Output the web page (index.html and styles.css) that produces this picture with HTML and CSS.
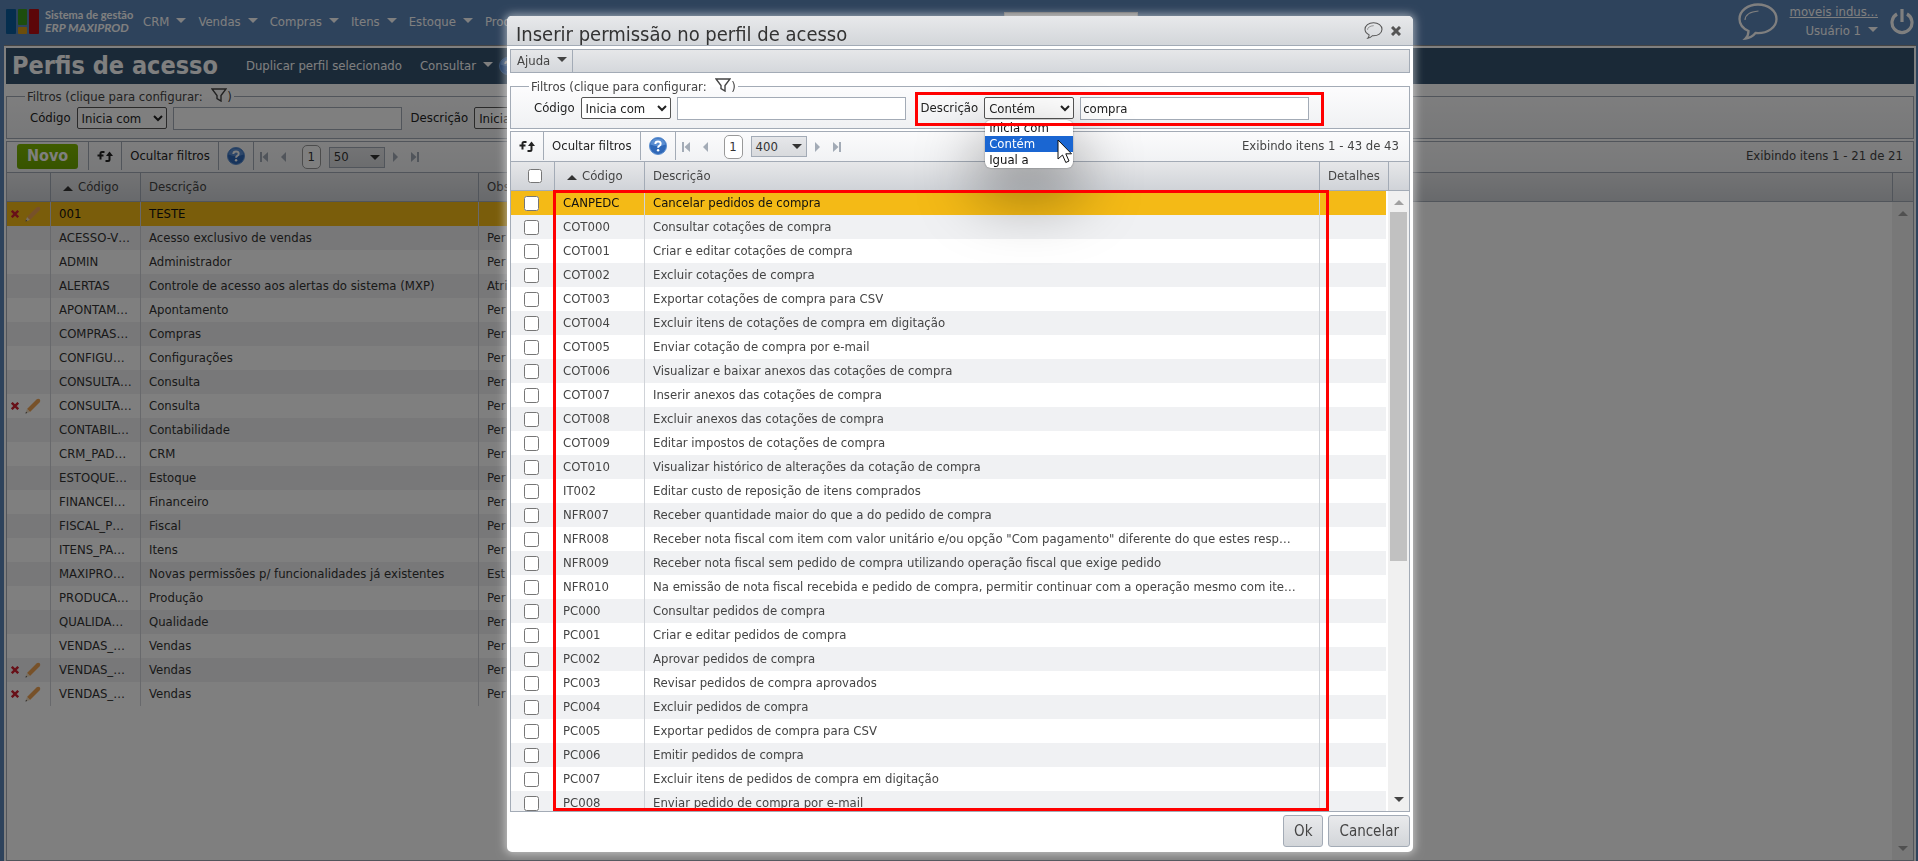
FILE: index.html
```html
<!DOCTYPE html>
<html lang="pt-BR">
<head>
<meta charset="utf-8">
<title>Perfis de acesso</title>
<link rel="stylesheet" href="styles.css">
</head>
<body>
<svg class="sprite" aria-hidden="true">
  <symbol id="i-refresh" viewBox="0 0 16 12"><path d="M3.500 9.500V3.500Q3.500 2 5 2H7.500M.5 5.500H6.500" fill="none" stroke="currentColor" stroke-width="2"/><path d="M12.500 4V9.500Q12.500 11 11 11H8.500" fill="none" stroke="currentColor" stroke-width="2"/><path d="M9 6 12.500 1.500 16 6Z" fill="currentColor"/></symbol>
  <symbol id="i-funnel" viewBox="0 0 16 14"><path d="M1 1H15L10 7.500V13L6 10.500V7.500Z" fill="#fff" fill-opacity=".3" stroke="currentColor" stroke-width="1.400"/></symbol>
  <symbol id="i-help" viewBox="0 0 18 18"><circle cx="9" cy="9" r="8.500" fill="#2f68b8" stroke="#5d8fd0"/><path d="M1.500 7.500A7.700 7.700 0 0 1 16.500 7.500Q9 11 1.500 7.500Z" fill="#6fa0dd" opacity=".7"/><path d="M6.300 7Q6.400 4.500 9 4.500T11.700 6.800Q11.700 8.200 10.300 8.900 9.100 9.500 9.100 10.800" fill="none" stroke="#fff" stroke-width="1.900"/><circle cx="9.100" cy="13.200" r="1.200" fill="#fff"/></symbol>
  <symbol id="i-first" viewBox="0 0 8 10"><path d="M0 0H2V10H0ZM8 0V10L2.500 5Z" fill="currentColor"/></symbol>
  <symbol id="i-prev" viewBox="0 0 8 10"><path d="M6 0V10L1 5Z" fill="currentColor"/></symbol>
  <symbol id="i-next" viewBox="0 0 8 10"><path d="M2 0V10L7 5Z" fill="currentColor"/></symbol>
  <symbol id="i-last" viewBox="0 0 8 10"><path d="M6 0H8V10H6ZM0 0V10L5.500 5Z" fill="currentColor"/></symbol>
  <symbol id="i-balloon" viewBox="0 0 40 37"><path d="M20 1.500C9.500 1.500 1.500 8 1.500 16 1.500 21 5 25.500 10.500 28 10.500 31 9.500 33.500 7.500 35.500 12 35 15.500 32.500 17.500 30 30 31 38.500 24 38.500 16 38.500 8 30.500 1.500 20 1.500Z" fill="none" stroke="currentColor" stroke-width="2.300"/><path d="M7 17Q7.500 9 20.500 8" fill="none" stroke="currentColor" stroke-width="1.200"/></symbol>
  <symbol id="i-power" viewBox="0 0 24 26"><path d="M7 5A10 10 0 1 0 17 5" fill="none" stroke="currentColor" stroke-width="3.200"/><path d="M12 0V13" stroke="currentColor" stroke-width="3.200"/></symbol>
  <symbol id="i-x" viewBox="0 0 10 10"><path d="M1 1 9 9M9 1 1 9" stroke="currentColor" stroke-width="3"/></symbol>
  <symbol id="i-pencil" viewBox="0 0 16 16"><path d="M2 11 11.500 1.500Q13 0 14.800 1.200 16 3 14.500 4.500L5 14Z" fill="#efa352"/><path d="M2 11 5 14 .5 15.500Z" fill="#f0dcc0"/><path d="M.5 15.500 1 13.800 2.200 15Z" fill="#444"/></symbol>
</svg>

<div class="app">
  <header class="top">
    <a class="logo" href="#" aria-label="ERP MAXIPROD">
      <svg width="34" height="26" viewBox="0 0 34 26" aria-hidden="true"><rect width="10" height="25" rx="1" fill="#0a5d9c"/><rect x="12" width="9" height="16" rx="1" fill="#3a9a1c"/><rect x="12" y="18" width="9" height="7" rx="1" fill="#d99b16"/><rect x="23" width="10" height="25" rx="1" fill="#b80d12"/></svg>
      <span class="logo-text"><small>Sistema de gestão</small><b>ERP MAXIPROD</b></span>
    </a>
    <nav class="menu">
      <a href="#">CRM</a><a href="#">Vendas</a><a href="#">Compras</a><a href="#">Itens</a><a href="#">Estoque</a><a href="#">Prod</a>
    </nav>
    <input class="search" type="text" aria-label="Pesquisar">
    <div class="account">
      <svg class="balloon" width="40" height="37"><use href="#i-balloon"/></svg>
      <div class="who"><a class="company" href="#">moveis indus...</a><a class="drop" href="#">Usuário 1</a></div>
      <svg width="24" height="26"><use href="#i-power"/></svg>
    </div>
  </header>

  <main class="page">
    <div class="titlebar">
      <h1>Perfis de acesso</h1>
      <a href="#">Duplicar perfil selecionado</a>
      <a class="drop" href="#">Consultar</a>
      <svg width="18" height="18"><use href="#i-help"/></svg>
    </div>
    <fieldset class="filters">
      <legend>Filtros (clique para configurar: <svg width="16" height="14"><use href="#i-funnel"/></svg>)</legend>
      <div class="fields">
        <div class="field"><label for="p-cod-op">Código</label><select id="p-cod-op"><option>Inicia com</option></select><input type="text" aria-label="Código"></div>
        <div class="field"><label for="p-desc-op">Descrição</label><select id="p-desc-op"><option>Inicia com</option></select><input type="text" aria-label="Descrição"></div>
      </div>
    </fieldset>
    <section class="grid">
      <div class="toolbar">
        <div class="tool"><button class="new">Novo</button></div>
        <button class="tool" aria-label="Atualizar"><svg width="16" height="12"><use href="#i-refresh"/></svg></button>
        <button class="tool">Ocultar filtros</button>
        <button class="tool" aria-label="Ajuda"><svg width="18" height="18"><use href="#i-help"/></svg></button>
        <div class="pager">
          <svg width="8" height="10"><use href="#i-first"/></svg><svg width="8" height="10"><use href="#i-prev"/></svg>
          <span class="current">1</span>
          <button class="size">50</button>
          <svg width="8" height="10"><use href="#i-next"/></svg><svg width="8" height="10"><use href="#i-last"/></svg>
        </div>
        <span class="count">Exibindo itens 1 - 21 de 21</span>
      </div>
      <div class="head">
        <table class="cols profiles"><thead><tr><th></th><th class="sorted">Código</th><th>Descrição</th><th>Obs</th></tr></thead></table>
        <span class="corner"></span>
      </div>
      <div class="body">
        <table class="cols profiles"><tbody id="profiles"></tbody></table>
        <div class="scroll idle"><i class="up"></i><i class="down"></i></div>
      </div>
    </section>
  </main>
</div>

<div class="overlay">
  <div class="dialog" role="dialog" aria-labelledby="dlg-title">
    <div class="dialog-title">
      <h2 id="dlg-title">Inserir permissão no perfil de acesso</h2>
      <button aria-label="Comentário"><svg width="19" height="17"><use href="#i-balloon"/></svg></button>
      <button aria-label="Fechar"><svg width="10" height="10"><use href="#i-x"/></svg></button>
    </div>
    <div class="dialog-content">
      <div class="helpbar"><button class="drop">Ajuda</button></div>
      <fieldset class="filters">
        <legend>Filtros (clique para configurar: <svg width="16" height="14"><use href="#i-funnel"/></svg>)</legend>
        <div class="fields">
          <div class="field"><label for="d-cod-op">Código</label><select id="d-cod-op"><option>Inicia com</option></select><input type="text" aria-label="Código"></div>
          <div class="field marked">
            <label for="d-desc-op">Descrição</label>
            <div class="combo">
              <select id="d-desc-op"><option>Contém</option></select>
              <ul class="options">
                <li>Inicia com</li>
                <li class="active">Contém</li>
                <li>Igual a</li>
              </ul>
              <svg class="cursor" width="16" height="25" viewBox="0 0 16 25"><path d="M1 1V20L5.500 16 8.800 23.500 12 22 8.800 14.800H14.500Z" fill="#fff" stroke="#111"/></svg>
            </div>
            <input type="text" aria-label="Descrição" value="compra">
          </div>
        </div>
      </fieldset>
      <section class="grid">
        <div class="toolbar">
          <button class="tool" aria-label="Atualizar"><svg width="16" height="12"><use href="#i-refresh"/></svg></button>
          <button class="tool">Ocultar filtros</button>
          <button class="tool" aria-label="Ajuda"><svg width="18" height="18"><use href="#i-help"/></svg></button>
          <div class="pager">
            <svg width="8" height="10"><use href="#i-first"/></svg><svg width="8" height="10"><use href="#i-prev"/></svg>
            <span class="current">1</span>
            <button class="size">400</button>
            <svg width="8" height="10"><use href="#i-next"/></svg><svg width="8" height="10"><use href="#i-last"/></svg>
          </div>
          <span class="count">Exibindo itens 1 - 43 de 43</span>
        </div>
        <div class="head">
          <table class="cols"><thead><tr><th class="pick"><input type="checkbox" aria-label="Selecionar todos"></th><th class="sorted">Código</th><th>Descrição</th><th class="details">Detalhes</th></tr></thead></table>
          <span class="corner"></span>
        </div>
        <div class="body framed">
          <div class="rows"><table class="cols"><tbody id="permissions"></tbody></table></div>
          <div class="scroll"><i class="up"></i><b class="thumb"></b><i class="down"></i></div>
        </div>
      </section>
      <div class="actions"><button>Ok</button><button>Cancelar</button></div>
    </div>
  </div>
</div>
<script src="script.js"></script>
</body>
</html>
```

FILE: styles.css
```css
* { box-sizing: border-box; }
html, body { height: 100%; }
body {
  margin: 0;
  overflow: hidden;
  background: #5d86b8;
  color: #333;
  font: 13px/16px "DejaVu Sans Condensed", "DejaVu Sans", Verdana, sans-serif;
}
a { color: inherit; text-decoration: none; }
button, input, select { font: inherit; color: inherit; }
button { border: 0; padding: 0; background: none; }
svg { display: block; }
.sprite { position: absolute; width: 0; height: 0; }

.app { display: flex; flex-direction: column; height: 100vh; }

/* top bar */
.top {
  display: flex;
  align-items: center;
  height: 45px;
  padding: 0 4px 2px 6px;
  color: #fff;
}
.logo { display: flex; align-items: center; gap: 5px; width: 137px; }
.logo-text { display: flex; flex-direction: column; font-family: Lato, sans-serif; }
.logo-text small { font-size: 11px; line-height: 12px; font-weight: 700; }
.logo-text b { font-size: 12px; line-height: 14px; font-style: italic; }
.menu { display: flex; gap: 12px; }
.menu a::after, .drop::after {
  content: "";
  display: inline-block;
  margin-left: 7px;
  border: 5px solid transparent;
  border-top-color: currentColor;
  border-bottom: 0;
  vertical-align: 3px;
}
.search { width: 134px; height: 20px; margin-left: auto; border: 1px solid #ddd; }
.account { display: flex; align-items: center; gap: 12px; margin-left: 600px; }
.who { display: flex; flex-direction: column; align-items: flex-end; gap: 3px; }
.company { text-decoration: underline; }

/* page frame */
.page {
  flex: 1;
  display: flex;
  flex-direction: column;
  min-height: 0;
  margin: 0 2px 0 4px;
  padding: 2px 2px 0;
  background: #fff;
  border-top: 1px solid #888;
}
.titlebar {
  display: flex;
  align-items: center;
  gap: 18px;
  height: 36px;
  margin-bottom: 4px;
  padding: 0 6px;
  flex: none;
  background: #34526f;
  color: #fff;
}
.titlebar h1 { margin: 0 10px 0 0; font-size: 25px; line-height: 32px; }
.titlebar svg { margin-left: -12px; }

/* filters */
.filters {
  flex: none;
  min-width: 0;
  margin: 0 0 2px;
  padding: 0 16px 2px 18px;
  border: 1px solid #a3abb6;
  background: linear-gradient(#fcfcfd, #f0f1f3);
}
.filters legend { height: 16px; padding: 0 2px; color: #444; white-space: nowrap; }
.filters legend svg { display: inline-block; margin: 0 0 0 5px; vertical-align: -1px; }
.fields { display: flex; gap: 3px; height: 34px; margin-top: -2px; padding-left: 5px; }
.field { display: flex; align-items: center; flex: none; padding: 0 6px 2px 0; color: #222; }
.field label { margin-right: 6px; }
.field select {
  width: 90px;
  height: 22px;
  margin-right: 6px;
  padding: 0;
  border: 1px solid #555;
  border-radius: 2px;
  background-color: #fff;
}
.field input { width: 229px; height: 23px; padding: 0 2px; border: 1px solid #a3abb6; background: #fff; }
.marked { position: relative; padding: 0 15px 2px 6px; }
.marked::after, .framed::after {
  content: "";
  position: absolute;
  z-index: 3;
  inset: 0;
  border: 3px solid #f00;
  pointer-events: none;
}
.combo { position: relative; }
.options {
  position: absolute;
  z-index: 2;
  top: 23px;
  left: 1px;
  width: 88px;
  margin: 0;
  padding: 0;
  list-style: none;
  overflow: visible;
  background: #fff;
  border-radius: 6px;
  box-shadow: 0 0 2px rgba(0, 0, 0, .4), 0 24px 60px 8px rgba(0, 0, 0, .34);
  color: #111;
}
.options li { padding: 0 4px; line-height: 16px; }
.options .active { background: #1a66d2; color: #fff; }
.cursor { position: absolute; z-index: 4; top: 42px; left: 73px; }

/* grid */
.grid {
  flex: 1;
  display: flex;
  flex-direction: column;
  min-height: 0;
  border: 1px solid #a3abb6;
}
.toolbar { display: flex; flex: none; height: 30px; background: linear-gradient(#fbfbfc, #f1f2f4); }
.tool {
  display: flex;
  align-items: center;
  height: 28px;
  padding: 0 8px;
  border-right: 1px solid #a3abb6;
  color: #222;
}
.tool:has(.new) { padding: 0 10px; }
.new {
  height: 25px;
  padding: 0 10px;
  border-radius: 3px;
  background: linear-gradient(#7fb800, #6ea800);
  color: #fff;
  font-size: 16px;
  font-weight: 700;
}
.pager { display: flex; align-items: center; gap: 12px; padding: 0 6px; color: #a3abb6; }
.current {
  width: 19px;
  height: 24px;
  margin-left: 2px;
  border: 1px solid #999;
  border-radius: 5px;
  background: #fff;
  color: #333;
  line-height: 22px;
  text-align: center;
}
.size {
  display: flex;
  align-items: center;
  justify-content: space-between;
  width: 56px;
  height: 21px;
  margin: 0 -6px 0 -4px;
  padding: 0 4px;
  border: 1px solid #a3abb6;
  background: linear-gradient(#e6e7ea, #d8dadd);
  color: #333;
}
.size::after {
  content: "";
  border: 5px solid transparent;
  border-top-color: #333;
  border-bottom: 0;
}
.count { margin: 6px 10px 0 auto; color: #444; }
.head, .body { display: flex; }
.head {
  flex: none;
  height: 30px;
  border: solid #a3abb6;
  border-width: 1px 0;
  background: linear-gradient(#e6e7e9, #d0d3d8);
}
.corner { flex: none; width: 20px; }
.cols { width: 100%; table-layout: fixed; border-collapse: separate; border-spacing: 0; }
.cols th, .cols td {
  height: 24px;
  padding: 0 8px;
  overflow: hidden;
  border-right: 1px solid #d0d3d8;
  text-align: left;
  white-space: nowrap;
}
.cols th { height: 28px; border-color: #a3abb6; color: #444; font-weight: 400; }
.cols td:last-child { border-right: 0; }
.cols th:nth-child(1), .cols td:nth-child(1) { width: 44px; padding: 0 4px; }
.cols th:nth-child(2), .cols td:nth-child(2) { width: 90px; padding-right: 0; }
.profiles th:nth-child(3), .profiles td:nth-child(3) { width: 338px; }
.body .profiles { width: 47%; }
.sorted::before {
  content: "";
  display: inline-block;
  margin: 0 5px 0 4px;
  border: 5px solid transparent;
  border-bottom-color: #333;
  border-top: 0;
}
.cols tbody tr:nth-child(even) { background: #f0f1f3; }
.cols tbody tr.selected { background: #f4ba16; color: #111; }
.marks { display: flex; align-items: center; gap: 6px; color: #d02030; }
.body { flex: 1; position: relative; min-height: 0; align-items: flex-start; }
.rows { flex: 1; align-self: stretch; min-width: 0; overflow: hidden; margin-right: 2px; }
.dialog .toolbar { height: 29px; }
.dialog .cols th:nth-child(4) { width: 69px; padding-right: 0; }
.dialog .cols td:nth-child(4) { width: 66px; }
.dialog .cols input { display: block; width: 15px; height: 15px; margin: 0 0 0 9px; }
.dialog .cols th input { width: 14px; height: 14px; margin-left: 13px; }
.scroll {
  display: flex;
  flex-direction: column;
  align-items: center;
  align-self: stretch;
  flex: none;
  width: 21px;
  margin-left: auto;
  padding: 9px 0;
  background: #f0f0f0;
}
.up, .down { border: 5px solid transparent; }
.up { border-bottom-color: #a0a0a0; border-top: 0; }
.down { margin-top: auto; border-top-color: #444; border-bottom: 0; }
.thumb { width: 17px; height: 58%; margin-top: 7px; background: #c1c1c1; }
.idle .down { border-top-color: #a0a0a0; }

/* dialog */
.overlay {
  position: fixed;
  inset: 0;
  display: flex;
  justify-content: center;
  padding: 16px 8px 9px 10px;
  background: rgba(0, 0, 0, .5);
}
.dialog {
  display: flex;
  flex-direction: column;
  width: 906px;
  border-radius: 5px;
  background: #fff;
  box-shadow: 0 0 8px 2px rgba(255, 255, 255, .5);
  color: #444;
}
.dialog-title {
  display: flex;
  align-items: center;
  gap: 8px;
  height: 30px;
  padding: 0 12px 0 9px;
  border-bottom: 1px solid #a3abb6;
  border-radius: 5px 5px 0 0;
  background: linear-gradient(#e8e9eb, #d3d6da);
  color: #555;
}
.dialog-title h2 { flex: 1; margin: 6px 0 0; color: #333; font-size: 20px; line-height: 24px; font-weight: 400; }
.dialog-content {
  flex: 1;
  display: flex;
  flex-direction: column;
  min-height: 0;
  padding: 3px 3px 5px;
}
.helpbar {
  flex: none;
  height: 24px;
  margin-bottom: 5px;
  border: 1px solid #a3abb6;
  background: linear-gradient(#e6e7e9, #d5d8dc);
}
.helpbar button { height: 22px; padding: 0 5px 0 6px; border-right: 1px solid #a3abb6; }
.framed::after { inset: -1px 80px 0 42px; }
.actions { display: flex; justify-content: flex-end; gap: 5px; margin-top: 3px; }
.actions button {
  height: 32px;
  padding: 0 10px;
  border: 1px solid #a3abb6;
  border-radius: 3px;
  background: linear-gradient(#e9eaec, #d2d5d9);
  font-size: 15px;
}
```

FILE: script.js
```js
const profiles = [
  ["001", "TESTE", "", true],
  ["ACESSO-V…", "Acesso exclusivo de vendas", "Per"],
  ["ADMIN", "Administrador", "Per"],
  ["ALERTAS", "Controle de acesso aos alertas do sistema (MXP)", "Atri"],
  ["APONTAM…", "Apontamento", "Per"],
  ["COMPRAS…", "Compras", "Per"],
  ["CONFIGU…", "Configurações", "Per"],
  ["CONSULTA…", "Consulta", "Per"],
  ["CONSULTA…", "Consulta", "Per", true],
  ["CONTABIL…", "Contabilidade", "Per"],
  ["CRM_PAD…", "CRM", "Per"],
  ["ESTOQUE…", "Estoque", "Per"],
  ["FINANCEI…", "Financeiro", "Per"],
  ["FISCAL_P…", "Fiscal", "Per"],
  ["ITENS_PA…", "Itens", "Per"],
  ["MAXIPRO…", "Novas permissões p/ funcionalidades já existentes", "Est"],
  ["PRODUCA…", "Produção", "Per"],
  ["QUALIDA…", "Qualidade", "Per"],
  ["VENDAS_…", "Vendas", "Per"],
  ["VENDAS_…", "Vendas", "Per", true],
  ["VENDAS_…", "Vendas", "Per", true]
];

const permissions = [
  ["CANPEDC", "Cancelar pedidos de compra"],
  ["COT000", "Consultar cotações de compra"],
  ["COT001", "Criar e editar cotações de compra"],
  ["COT002", "Excluir cotações de compra"],
  ["COT003", "Exportar cotações de compra para CSV"],
  ["COT004", "Excluir itens de cotações de compra em digitação"],
  ["COT005", "Enviar cotação de compra por e-mail"],
  ["COT006", "Visualizar e baixar anexos das cotações de compra"],
  ["COT007", "Inserir anexos das cotações de compra"],
  ["COT008", "Excluir anexos das cotações de compra"],
  ["COT009", "Editar impostos de cotações de compra"],
  ["COT010", "Visualizar histórico de alterações da cotação de compra"],
  ["IT002", "Editar custo de reposição de itens comprados"],
  ["NFR007", "Receber quantidade maior do que a do pedido de compra"],
  ["NFR008", "Receber nota fiscal com item com valor unitário e/ou opção \"Com pagamento\" diferente do que estes resp…"],
  ["NFR009", "Receber nota fiscal sem pedido de compra utilizando operação fiscal que exige pedido"],
  ["NFR010", "Na emissão de nota fiscal recebida e pedido de compra, permitir continuar com a operação mesmo com ite…"],
  ["PC000", "Consultar pedidos de compra"],
  ["PC001", "Criar e editar pedidos de compra"],
  ["PC002", "Aprovar pedidos de compra"],
  ["PC003", "Revisar pedidos de compra aprovados"],
  ["PC004", "Excluir pedidos de compra"],
  ["PC005", "Exportar pedidos de compra para CSV"],
  ["PC006", "Emitir pedidos de compra"],
  ["PC007", "Excluir itens de pedidos de compra em digitação"],
  ["PC008", "Enviar pedido de compra por e-mail"]
];

const marks = '<div class="marks"><svg width="8" height="8"><use href="#i-x"/></svg><svg width="16" height="16"><use href="#i-pencil"/></svg></div>';

document.getElementById("profiles").innerHTML = profiles.map(([code, text, note, editable], i) =>
  `<tr class="${i ? "" : "selected"}"><td>${editable ? marks : ""}</td><td>${code}</td><td>${text}</td><td>${note}</td></tr>`
).join("");

document.getElementById("permissions").innerHTML = permissions.map(([code, text], i) =>
  `<tr class="${i ? "" : "selected"}"><td><input type="checkbox" aria-label="${code}"></td><td>${code}</td><td>${text}</td><td></td></tr>`
).join("");
```
